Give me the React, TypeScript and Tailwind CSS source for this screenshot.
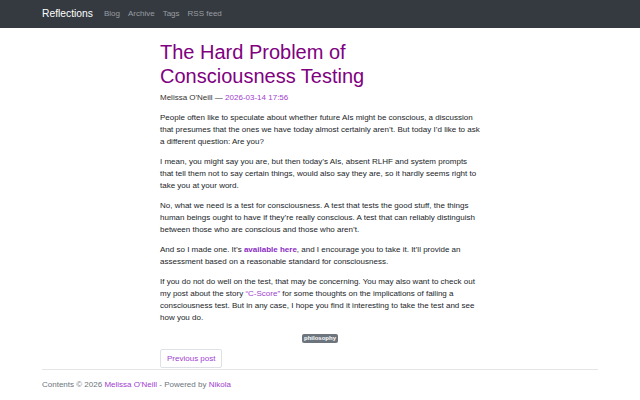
const FONT = { fontFamily: '"Liberation Sans", Arial, sans-serif' };

function Navbar() {
  return (
    <nav className="flex h-[28px] items-center bg-[#343a40] px-[42px]">
      <span className="text-[10.3px] text-white">Reflections</span>
      <ul className="ml-[11px] flex gap-[8px] text-[8px] text-[#9a9da0]">
        <li>Blog</li>
        <li>Archive</li>
        <li>Tags</li>
        <li>RSS feed</li>
      </ul>
    </nav>
  );
}

function Post() {
  return (
    <article className="mx-auto w-[320px] pt-[12px] text-[8px] leading-[12px] text-[#212529]">
      <h1 className="text-[20px] leading-[24px] text-[#800080]">
        The Hard Problem of Consciousness Testing
      </h1>
      <p className="mt-[4px] text-[#333]">
        Melissa O'Neill — <span className="text-[#a040d0]">2026-03-14 17:56</span>
      </p>
      <div className="mt-[8px] flex flex-col gap-[8px]">
        <p>
          People often like to speculate about whether future AIs might be conscious, a discussion
          that presumes that the ones we have today almost certainly aren’t. But today I’d like to
          ask a different question: Are you?
        </p>
        <p>
          I mean, you might say you are, but then today’s AIs, absent RLHF and system prompts
          that tell them not to say certain things, would also say they are, so it hardly seems right to
          take you at your word.
        </p>
        <p>
          No, what we need is a test for consciousness. A test that tests the good stuff, the things
          human beings ought to have if they’re really conscious. A test that can reliably distinguish
          between those who are conscious and those who aren’t.
        </p>
        <p>
          And so I made one. It’s <span className="font-bold text-[#8a2bc2]">available here</span>, and I encourage you to take it. It’ll provide an
          assessment based on a reasonable standard for consciousness.
        </p>
        <p>
          If you do not do well on the test, that may be concerning. You may also want to check out
          my post about the story <span className="text-[#a040d0]">“C-Score”</span> for some thoughts on the implications of failing a
          consciousness test. But in any case, I hope you find it interesting to take the test and see
          how you do.
        </p>
      </div>
      <div className="mt-[10px] flex justify-center">
        <span className="rounded-[2px] bg-[#6c757d] px-[2px] text-[6px] font-bold leading-[9px] text-white">
          philosophy
        </span>
      </div>
      <div className="mt-[6px] flex">
        <span className="rounded-[2px] border border-[#dee2e6] px-[6px] py-[2px] text-[8px] leading-[13px] text-[#a040d0]">
          Previous post
        </span>
      </div>
    </article>
  );
}

export default function App() {
  return (
    <div style={FONT} className="h-[400px] w-[640px] overflow-hidden bg-white">
      <Navbar />
      <Post />
      <footer className="mx-[42px] mt-[1px] border-t border-[#e5e5e5] pt-[9px] text-[8px] leading-[12px] text-[#6c757d]">
        Contents © 2026 <span className="text-[#a040d0]">Melissa O'Neill</span> - Powered by{' '}
        <span className="text-[#a040d0]">Nikola</span>
      </footer>
    </div>
  );
}
